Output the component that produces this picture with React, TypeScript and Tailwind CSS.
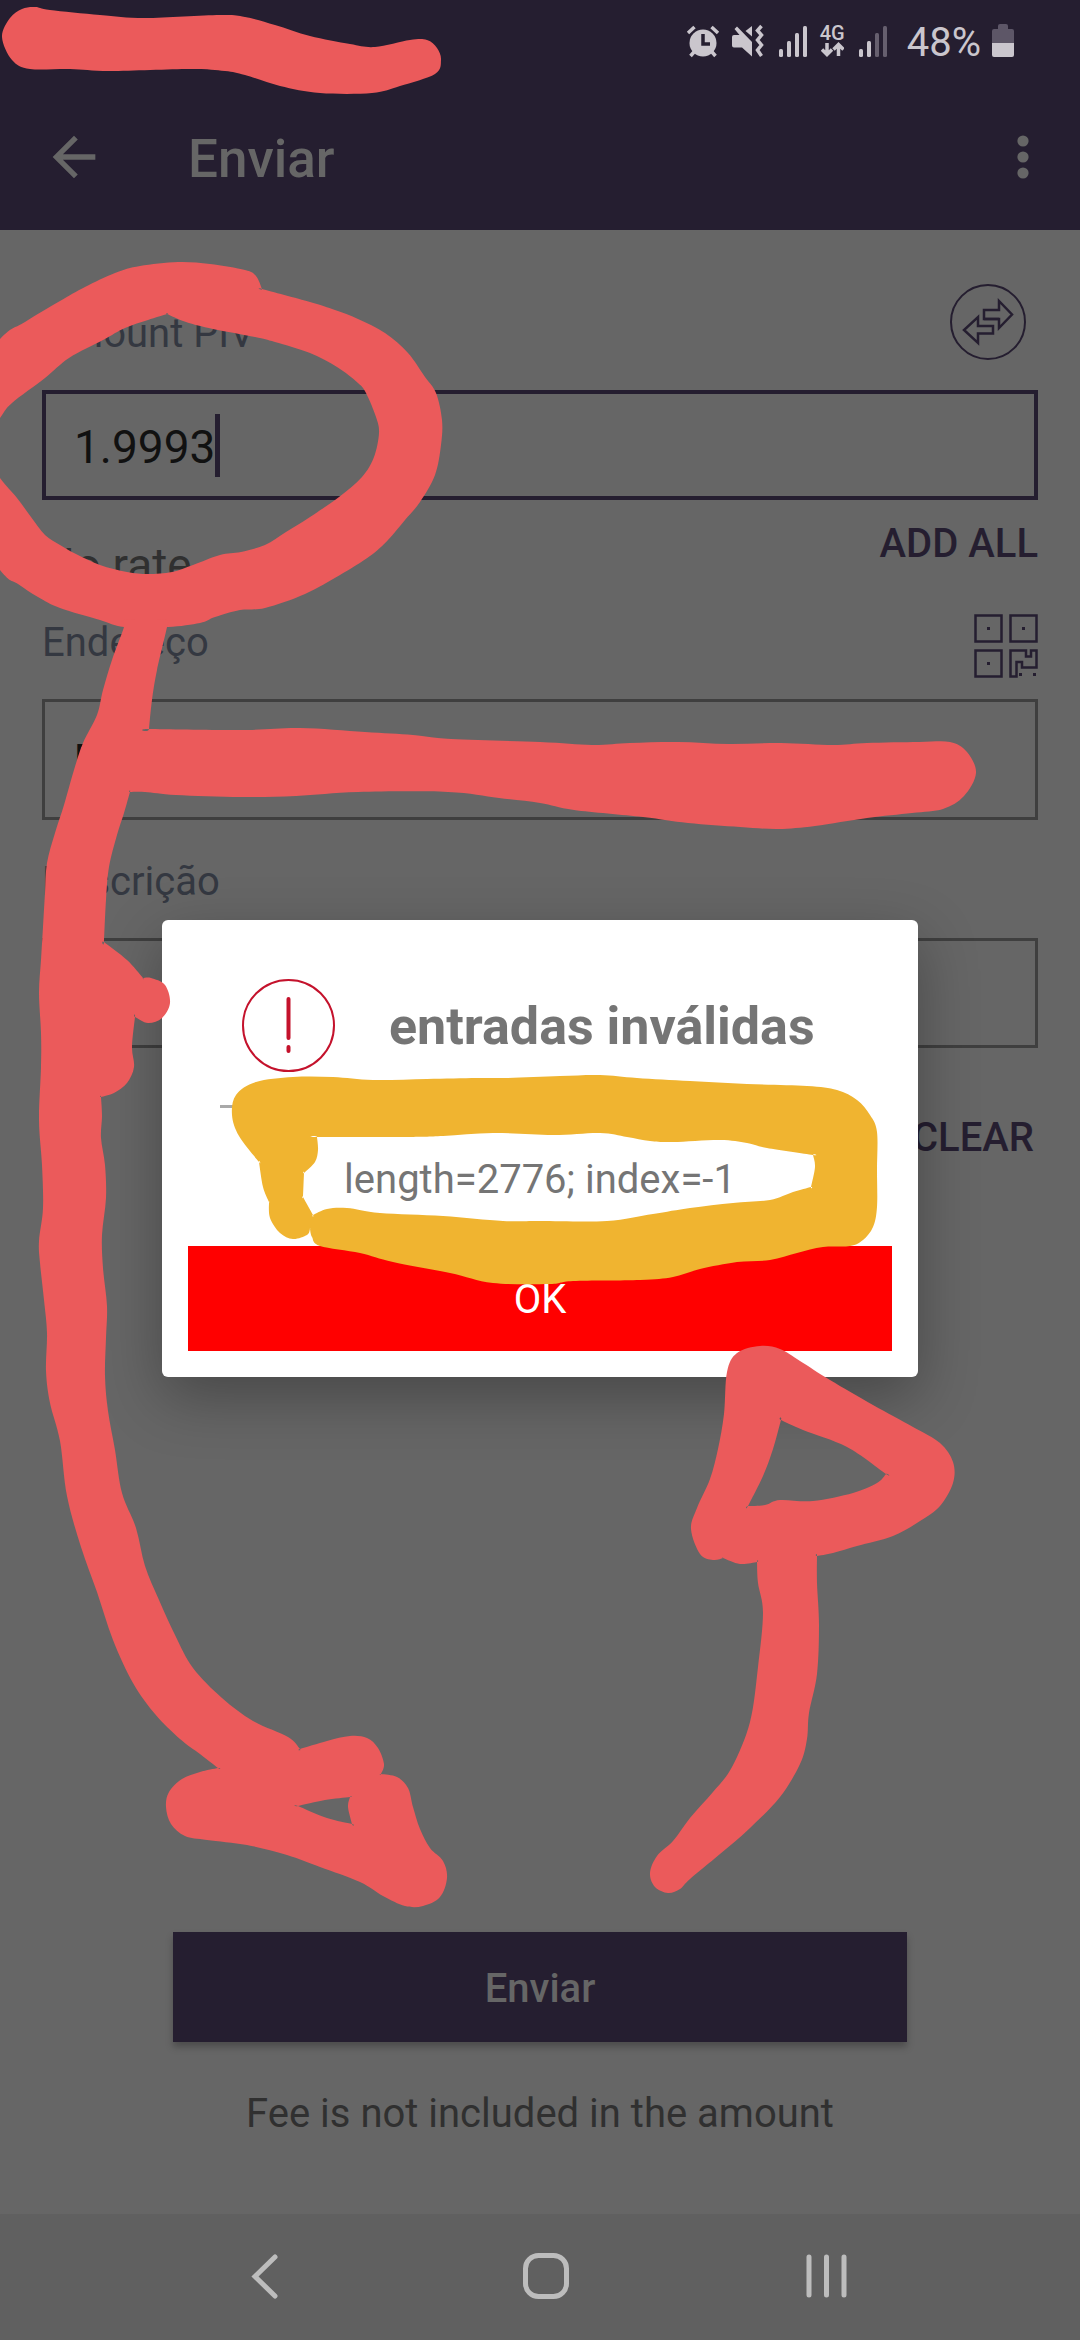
import React from "react";

type Point = [number, number];

const INK = "#251e30";

// Closed smooth curve through the points. A point listed twice makes a sharp corner.
function smooth(points: Point[]) {
  const n = points.length;
  const at = (i: number) => points[(i + n) % n];
  let d = `M${at(0)[0]} ${at(0)[1]}`;
  for (let i = 0; i < n; i++) {
    const [p0, p1, p2, p3] = [at(i - 1), at(i), at(i + 1), at(i + 2)];
    const c1 = [p1[0] + (p2[0] - p0[0]) / 6, p1[1] + (p2[1] - p0[1]) / 6];
    const c2 = [p2[0] - (p3[0] - p1[0]) / 6, p2[1] - (p3[1] - p1[1]) / 6];
    d += `C${c1[0]} ${c1[1]} ${c2[0]} ${c2[1]} ${p2[0]} ${p2[1]}`;
  }
  return d + "Z";
}

const statusScribble: Point[] = [
  [2, 37], [10, 18], [22, 9], [35, 7], [50, 10], [100, 15], [145, 18], [220, 15], [245, 17], [275, 25],
  [310, 36], [350, 44], [375, 47], [410, 40], [427, 40], [437, 48], [441, 60], [435, 74], [400, 86],
  [372, 93], [320, 93], [280, 86], [245, 75], [225, 71], [190, 69], [110, 71], [70, 69], [30, 69], [12, 60],
];

const ringOuter: Point[] = [
  [0, 339], [25, 322], [60, 301], [85, 287], [115, 273], [140, 266], [178, 262], [210, 264], [245, 270],
  [256, 276], [262, 289], [262, 289], [310, 302], [335, 310], [358, 319], [385, 333], [408, 353], [425, 377],
  [436, 393], [442, 420], [441, 445], [435, 475], [420, 502], [405, 520], [388, 540], [370, 556], [340, 575],
  [305, 594], [265, 608], [240, 610], [215, 617], [200, 623], [168, 627], [124, 627], [100, 620], [60, 608],
  [38, 597], [18, 584], [0, 570], [-50, 500], [-50, 400],
];

const ringInner: Point[] = [
  [0, 418], [12, 403], [45, 378], [69, 358], [103, 340], [125, 328], [148, 320], [167, 314], [167, 314],
  [186, 322], [213, 329], [255, 337], [275, 342], [310, 353], [337, 367], [358, 383], [366, 393], [376, 417],
  [379, 433], [374, 457], [362, 477], [339, 497], [310, 517], [286, 532], [265, 545], [241, 552], [220, 555],
  [193, 565], [172, 572], [148, 574], [127, 572], [100, 565], [76, 554], [60, 545], [45, 535], [31, 517],
  [17, 498], [0, 478], [-20, 448],
];

const longArrow: Point[] = [
  [124, 620], [124, 627], [112, 660], [103, 690], [97, 715], [83, 743], [74, 770], [64, 805], [55, 833],
  [47, 863], [45, 893], [43, 927], [41, 960], [39, 993], [41, 1033], [41, 1067], [39, 1120], [42, 1165],
  [43, 1208], [39, 1241], [40, 1263], [44, 1300], [47, 1333], [46, 1371], [50, 1403], [60, 1441], [67, 1496],
  [81, 1547], [97, 1592], [113, 1640], [133, 1683], [155, 1714], [180, 1739], [200, 1754], [218, 1768],
  [218, 1768], [200, 1772], [182, 1779], [169, 1792], [166, 1807], [171, 1824], [185, 1836], [207, 1840],
  [247, 1845], [287, 1855], [320, 1867], [360, 1882], [383, 1896], [405, 1906], [423, 1906], [440, 1897],
  [447, 1878], [443, 1861], [430, 1848], [420, 1829], [413, 1807], [408, 1788], [397, 1777], [381, 1774],
  [381, 1774], [384, 1764], [378, 1748], [367, 1738], [350, 1736], [327, 1741], [300, 1749], [300, 1749],
  [288, 1737], [253, 1721], [222, 1698], [193, 1668], [175, 1635], [159, 1600], [145, 1566], [136, 1528],
  [122, 1493], [115, 1450], [108, 1411], [105, 1376], [106, 1338], [107, 1306], [103, 1268], [102, 1235],
  [106, 1198], [105, 1165], [101, 1138], [102, 1116], [101, 1097], [101, 1097], [114, 1093], [127, 1083],
  [134, 1067], [132, 1047], [135, 1017], [135, 1017], [148, 1023], [162, 1018], [170, 1003], [165, 985],
  [151, 978], [143, 978], [143, 978], [127, 960], [104, 942], [104, 942], [106, 900], [109, 867], [117, 835],
  [124, 813], [130, 792], [130, 792], [145, 792], [176, 795], [241, 797], [296, 796], [358, 792], [448, 792],
  [499, 798], [540, 803], [574, 810], [643, 817], [688, 823], [740, 827], [778, 829], [815, 826], [867, 818],
  [912, 813], [943, 809], [964, 796], [976, 773], [967, 752], [950, 742], [919, 742], [867, 743], [833, 745],
  [781, 743], [729, 744], [678, 742], [630, 743], [592, 745], [540, 742], [451, 739], [413, 735], [365, 732],
  [300, 728], [241, 730], [149, 729], [149, 729], [152, 700], [157, 670], [167, 627], [167, 620],
];

const longArrowHole: Point[] = [
  [298, 1806], [298, 1806], [325, 1800], [350, 1797], [350, 1797], [348, 1807], [352, 1824], [352, 1824],
  [327, 1818],
];

const upArrow: Point[] = [
  [760, 1346], [780, 1349], [800, 1361], [830, 1380], [873, 1405], [913, 1427], [940, 1443], [953, 1462],
  [953, 1483], [940, 1506], [920, 1521], [893, 1536], [857, 1546], [833, 1553], [817, 1556], [817, 1556],
  [817, 1583], [819, 1625], [817, 1674], [809, 1713], [807, 1739], [800, 1764], [780, 1797], [750, 1828],
  [720, 1854], [690, 1879], [680, 1889], [668, 1893], [655, 1887], [650, 1873], [657, 1856], [673, 1841],
  [690, 1818], [713, 1792], [732, 1767], [750, 1722], [758, 1667], [763, 1613], [758, 1583], [757, 1562],
  [757, 1562], [740, 1564], [723, 1558], [723, 1558], [713, 1560], [700, 1554], [691, 1529], [697, 1508],
  [710, 1479], [718, 1449], [724, 1414], [727, 1372], [737, 1353],
];

const upArrowHole: Point[] = [
  [781, 1420], [781, 1420], [803, 1430], [847, 1447], [886, 1474], [886, 1474], [877, 1483], [853, 1493],
  [813, 1501], [780, 1500], [765, 1505], [748, 1506], [748, 1506], [763, 1476], [773, 1449],
];

const amberOuter: Point[] = [
  [256, 1082], [293, 1077], [333, 1077], [373, 1080], [427, 1079], [477, 1078], [507, 1078], [560, 1076],
  [600, 1075], [637, 1078], [690, 1081], [747, 1084], [807, 1086], [837, 1090], [857, 1100], [870, 1115],
  [877, 1132], [877, 1170], [877, 1207], [873, 1227], [863, 1240], [850, 1246], [823, 1247], [797, 1253],
  [770, 1260], [737, 1262], [700, 1269], [673, 1277], [640, 1280], [573, 1281], [550, 1284], [493, 1283],
  [450, 1273], [393, 1262], [360, 1253], [320, 1246], [312, 1237], [310, 1229], [310, 1229], [307, 1235],
  [293, 1239], [280, 1233], [270, 1218], [269, 1202], [269, 1202], [263, 1187], [259, 1162], [259, 1162],
  [239, 1136], [232, 1115], [236, 1095],
];

const amberInner: Point[] = [
  [317, 1137], [317, 1137], [403, 1137], [443, 1136], [493, 1133], [553, 1135], [600, 1133], [627, 1137],
  [650, 1141], [673, 1142], [720, 1140], [747, 1143], [767, 1148], [813, 1155], [813, 1155], [815, 1167],
  [811, 1187], [811, 1187], [793, 1192], [770, 1200], [733, 1203], [690, 1208], [653, 1214], [607, 1221],
  [540, 1221], [503, 1221], [443, 1216], [380, 1213], [347, 1208], [327, 1209], [313, 1215], [313, 1215],
  [303, 1197], [303, 1197], [304, 1173], [304, 1173], [315, 1162], [318, 1150],
];

function Annotations() {
  return (
    <svg
      className="pointer-events-none absolute inset-0 h-full w-full"
      viewBox="0 0 1080 2340"
      preserveAspectRatio="xMidYMin meet"
      fillRule="evenodd"
      aria-hidden="true"
    >
      <g fill="#eb5a5b">
        <path d={smooth(statusScribble)} />
        <path d={smooth(ringOuter) + smooth(ringInner)} />
        <path d={smooth(longArrow) + smooth(longArrowHole)} />
        <path d={smooth(upArrow) + smooth(upArrowHole)} />
      </g>
      <path fill="#f0b430" d={smooth(amberOuter) + smooth(amberInner)} />
    </svg>
  );
}

function AlarmIcon() {
  return (
    <svg width="34" height="34" viewBox="0 0 34 34" fill="none">
      <circle cx="17" cy="19" r="13.500" fill="#cac6cd" />
      <path d="M2 9L8.500 3M32 9L25.500 3" stroke="#cac6cd" strokeWidth="3.500" />
      <path d="M8 28L4.500 32M26 28L29.500 32" stroke="#cac6cd" strokeWidth="3.500" />
      <path d="M17 10v10h7" stroke={INK} strokeWidth="3.500" />
    </svg>
  );
}

function MuteVibrateIcon() {
  return (
    <svg width="34" height="34" viewBox="0 0 34 34" fill="#cac6cd">
      <path d="M3 11h5.500L3.500 5L6 2.500L21 18V32.500L11 23.500H3Q1 23.500 1 21.500V13Q1 11 3 11Z" />
      <path d="M21 2V12.500L14.500 7Z" />
      <path
        d="M30.500 2L26.500 6.500L30.500 11L26.500 16L30.500 21L26.500 26L30.500 32"
        fill="none"
        stroke="#cac6cd"
        strokeWidth="3.500"
      />
    </svg>
  );
}

function SignalIcon({ bars }: { bars: number }) {
  const tops = [22, 14, 6, -1];
  return (
    <svg width="28" height="31" viewBox="0 -1 28 31">
      {tops.map((top, i) => (
        <rect
          key={top}
          x={i * 8}
          y={top}
          width="4"
          height={30 - top}
          rx="1.500"
          fill={i < bars ? "#cac6cd" : "#665f6e"}
        />
      ))}
    </svg>
  );
}

function StatusBar() {
  return (
    <div className="flex h-[84px] items-start justify-end pr-[66px] pt-[24px] text-[#cac6cd]">
      <div className="flex">
        <AlarmIcon />
        <div className="ml-[11px]">
          <MuteVibrateIcon />
        </div>
        <div className="ml-[14px] pt-[2px]">
          <SignalIcon bars={4} />
        </div>
        <div className="ml-[13px] flex w-[25px] flex-col items-center">
          <span className="text-[20px] font-medium leading-[18px]">4G</span>
          <svg width="23" height="15" viewBox="0 0 23 15" fill="none" stroke="#cac6cd" strokeWidth="3.500">
            <path d="M6 1V12M1 7.500L6 12.500L11 7.500M17.500 14V3M12.500 7.500L17.500 2.500L22.500 7.500" />
          </svg>
        </div>
        <div className="ml-[14px] pt-[2px]">
          <SignalIcon bars={2} />
        </div>
        <span className="ml-[20px] text-[40px] leading-[38px]">48%</span>
        <svg className="ml-[11px]" width="22" height="34" viewBox="0 0 22 34">
          <path d="M6 5V2Q6 0 8 0H14Q16 0 16 2V5H20Q22 5 22 7V19H0V7Q0 5 2 5Z" fill="#5d5667" />
          <path d="M0 19H22V31Q22 33 20 33H2Q0 33 0 31Z" fill="#cac6cd" />
        </svg>
      </div>
    </div>
  );
}

function AppBar() {
  return (
    <div className="flex h-[146px] items-center justify-between pl-[42px] pr-[25px] text-[#666666]">
      <div className="flex items-center">
        <button aria-label="Voltar">
          <svg width="64" height="64" viewBox="0 0 24 24" fill="currentColor">
            <path d="M20 11H7.830l5.590-5.590L12 4l-8 8 8 8 1.410-1.410L7.830 13H20v-2z" />
          </svg>
        </button>
        <h1 className="ml-[82px] pt-[3px] text-[53px] font-medium leading-[62px]">Enviar</h1>
      </div>
      <button aria-label="Mais opções">
        <svg width="64" height="64" viewBox="0 0 24 24" fill="currentColor">
          <circle cx="12" cy="6" r="2.100" />
          <circle cx="12" cy="12" r="2.100" />
          <circle cx="12" cy="18" r="2.100" />
        </svg>
      </button>
    </div>
  );
}

function SwapIcon() {
  return (
    <svg width="76" height="76" viewBox="0 0 76 76" fill="none" stroke={INK}>
      <circle cx="38" cy="38" r="37" strokeWidth="2" />
      <path d="M34 26H49V17L62 30.500L49 44V35H34Z" strokeWidth="2.500" />
      <path d="M43 42H28V33L14 46L28 59V49.500H43Z" fill="#666666" strokeWidth="2.500" />
      <path d="M34 35H49" strokeWidth="2.500" />
    </svg>
  );
}

function QrIcon() {
  return (
    <svg width="64" height="64" viewBox="0 0 64 64" fill="none" stroke={INK} strokeWidth="2.500">
      <path d="M1.500 1.500H27.500V27.500H1.500ZM36.500 1.500H62.500V27.500H36.500ZM1.500 36.500H27.500V62.500H1.500Z" />
      <path d="M36.500 62.500V36.500H52V42.500H57V36.500H62.500V53.500H48V48H42.500V62.500Z" />
      <path
        d="M13 13h3v3h-3zM48 13h3v3h-3zM13 48h3v3h-3zM45 59h3v3h-3zM59 59h3v3h-3z"
        fill={INK}
        stroke="none"
      />
    </svg>
  );
}

function SendForm() {
  return (
    <form className="flex flex-1 flex-col px-[42px] pt-[54px] text-[40px] leading-[46px]">
      <div className="mb-[30px] flex items-end justify-between pr-[12px]">
        <label htmlFor="amount" className="pb-[3px] text-[#343841]">
          Amount PIV
        </label>
        <button type="button" aria-label="Trocar moeda">
          <SwapIcon />
        </button>
      </div>
      <div className="flex h-[110px] items-center border-4 border-[#251e30] pl-[28px]">
        <input
          id="amount"
          defaultValue="1.9993"
          className="field-sizing-content bg-transparent pt-[3px] text-[46px] leading-[56px] text-[#111111] outline-none"
        />
        <span className="h-[63px] w-[5px] bg-[#251e30]" />
      </div>
      <div className="flex h-[114px] items-start justify-between">
        <span className="pt-[38px] text-[46px] leading-[54px] text-[#303030]">No rate</span>
        <button type="button" className="pt-[21px] font-medium text-[#251e30]">
          ADD ALL
        </button>
      </div>

      <div className="mb-[21px] flex items-end justify-between">
        <label htmlFor="address" className="pb-[12px] text-[#343841]">
          Endereço
        </label>
        <button type="button" aria-label="Ler código QR">
          <QrIcon />
        </button>
      </div>
      <input
        id="address"
        defaultValue="D"
        className="h-[121px] w-full border-[3px] border-[#3f3f3f] bg-transparent px-[29px] text-[#111111] outline-none"
      />

      <label htmlFor="description" className="mb-[33px] mt-[39px] text-[#343841]">
        Descrição
      </label>
      <input
        id="description"
        className="h-[110px] w-full border-[3px] border-[#3f3f3f] bg-transparent px-[29px] text-[#111111] outline-none"
      />
      <button type="button" className="mr-[4px] mt-[67px] self-end font-medium text-[#251e30]">
        CLEAR
      </button>

      <div className="mt-auto flex flex-col items-center pb-[77px]">
        <button
          type="submit"
          className="h-[110px] w-[734px] max-w-full bg-[#251e30] pt-[3px] font-medium text-[#666666] shadow-[0_5px_7px_rgba(0,0,0,0.25)]"
        >
          Enviar
        </button>
        <p className="mt-[49px] text-[#303030]">Fee is not included in the amount</p>
      </div>
    </form>
  );
}

function NavBar() {
  return (
    <nav className="flex h-[126px] items-center justify-between bg-[#606060] px-[232px]">
      <button aria-label="Voltar">
        <svg width="54" height="48" viewBox="0 0 54 48" fill="none" stroke="#bdbdbd" strokeWidth="5">
          <path d="M43 4L23 23.500L43 43" strokeLinecap="round" />
        </svg>
      </button>
      <button aria-label="Início">
        <svg width="48" height="48" viewBox="0 0 48 48" fill="none" stroke="#bdbdbd" strokeWidth="5">
          <rect x="3.500" y="2.500" width="41" height="41" rx="13" />
        </svg>
      </button>
      <button aria-label="Recentes">
        <svg width="42" height="48" viewBox="0 0 42 48" stroke="#bdbdbd" strokeWidth="5" strokeLinecap="round">
          <path d="M3 4V42M20.500 4V42M38 4V42" />
        </svg>
      </button>
    </nav>
  );
}

function ErrorDialog() {
  return (
    <div className="absolute inset-0 flex items-center justify-center pb-[127px] pt-[84px]">
      <div
        role="alertdialog"
        aria-labelledby="dialog-title"
        aria-describedby="dialog-message"
        className="flex w-[70%] flex-col rounded-[6px] bg-white px-[26px] pb-[26px] pt-[58px] shadow-[0_20px_60px_rgba(0,0,0,0.3)]"
      >
        <div className="flex items-center pl-[53px]">
          <svg width="95" height="95" viewBox="0 0 95 95" fill="none" stroke="#c4122c">
            <circle cx="47.500" cy="47.500" r="45.500" strokeWidth="2" />
            <path d="M47.500 21V60M47.500 69V73" strokeWidth="4" strokeLinecap="round" />
          </svg>
          <h2 id="dialog-title" className="ml-[53px] pt-[3px] text-[52px] font-bold leading-[62px] text-[#757575]">
            entradas inválidas
          </h2>
        </div>
        <hr className="mx-[32px] mt-[32px] border-t-[3px] border-[#a9a9a9]" />
        <p id="dialog-message" className="mt-[49px] text-center text-[40px] leading-[46px] text-[#757575]">
          length=2776; index=-1
        </p>
        <button className="mt-[43px] h-[105px] bg-[#ff0000] pt-[3px] text-[40px] leading-[46px] text-white">
          OK
        </button>
      </div>
    </div>
  );
}

export default function App() {
  return (
    <div className="relative flex min-h-screen flex-col overflow-hidden bg-[#666666] font-[Roboto,sans-serif]">
      <header className="bg-[#251e30]">
        <StatusBar />
        <AppBar />
      </header>
      <SendForm />
      <NavBar />
      <ErrorDialog />
      <Annotations />
    </div>
  );
}
